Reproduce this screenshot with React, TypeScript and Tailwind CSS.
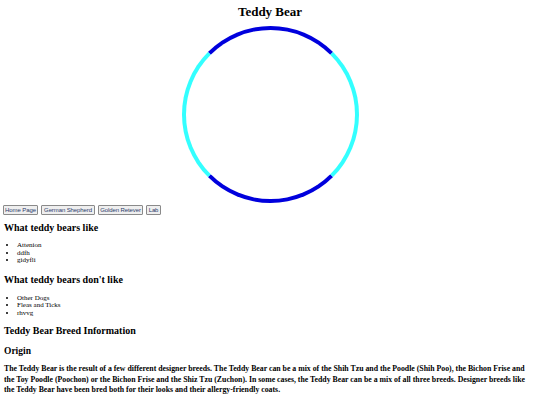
import React from "react";

const serif = { fontFamily: '"Liberation Serif", "Times New Roman", serif' };

export default function App() {
  const buttons = [
    { label: "Home Page", w: "w-[35px]" },
    { label: "German Shepherd", w: "w-[54px]" },
    { label: "Golden Retever", w: "w-[45px]" },
    { label: "Lab", w: "w-[15px]" },
  ];
  return (
    <div className="bg-white text-black px-[4px] min-h-[405px] overflow-hidden" style={serif}>
      <h1 className="text-[13px] leading-[15px] font-bold text-center pt-[4px]">Teddy Bear</h1>
      <div className="mx-auto mt-[7px] w-[177px] h-[177px] rounded-full border-[4px] border-t-[#0000dd] border-b-[#0000dd] border-l-[#33ffff] border-r-[#33ffff]" />
      <div className="flex gap-[3px] mt-[2px] -ml-[1px]">
        {buttons.map((b) => (
          <button
            key={b.label}
            className={`${b.w} h-[10px] flex items-center justify-center bg-[#efefef] border border-[#8a8a8a] rounded-[1px] text-[6px] leading-none text-[#2a3a6a] whitespace-nowrap tracking-[-0.1px]`}
            style={{ fontFamily: '"Liberation Sans", Arial, sans-serif' }}
          >
            {b.label}
          </button>
        ))}
      </div>
      <h2 className="text-[10px] leading-[12px] font-bold mt-[7px]">What teddy bears like</h2>
      <ul className="list-disc pl-[13px] mt-[8px] text-[7px] leading-[7.5px]">
        <li>Attenion</li>
        <li>ddfh</li>
        <li>gidyfli</li>
      </ul>
      <h2 className="text-[10px] leading-[12px] font-bold mt-[9px]">What teddy bears don't like</h2>
      <ul className="list-disc pl-[13px] mt-[9px] text-[7px] leading-[7.5px]">
        <li>Other Dogs</li>
        <li>Fleas and Ticks</li>
        <li>rhvvg</li>
      </ul>
      <h2 className="text-[10px] leading-[12px] font-bold mt-[8px]">Teddy Bear Breed Information</h2>
      <h3 className="text-[9.5px] leading-[11px] font-bold mt-[9px]">Origin</h3>
      <p className="text-[7.8px] leading-[10.5px] font-bold mt-[7px]">
        The Teddy Bear is the result of a few different designer breeds. The Teddy Bear can be a mix of the Shih Tzu and the Poodle (Shih Poo), the Bichon Frise and the Toy Poodle (Poochon) or the Bichon Frise and the Shiz Tzu (Zuchon). In some cases, the Teddy Bear can be a mix of all three breeds. Designer breeds like the Teddy Bear have been bred both for their looks and their allergy-friendly coats.
      </p>
      <h3 className="text-[9.5px] leading-[11px] font-bold mt-[8px]">Size</h3>
    </div>
  );
}
